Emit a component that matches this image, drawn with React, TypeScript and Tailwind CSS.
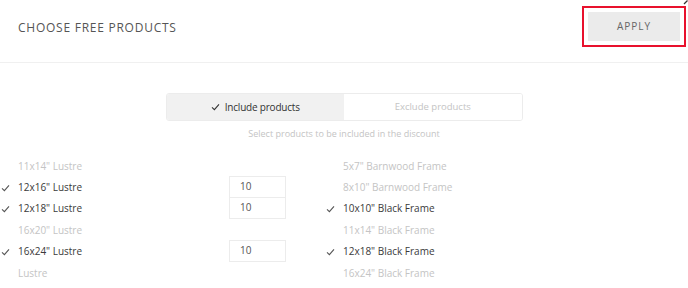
const left = [
  { name: '11x14" Lustre', on: false },
  { name: '12x16" Lustre', on: true, qty: '10' },
  { name: '12x18" Lustre', on: true, qty: '10' },
  { name: '16x20" Lustre', on: false },
  { name: '16x24" Lustre', on: true, qty: '10' },
  { name: 'Lustre', on: false },
]

const right = [
  { name: '5x7" Barnwood Frame', on: false },
  { name: '8x10" Barnwood Frame', on: false },
  { name: '10x10" Black Frame', on: true },
  { name: '11x14" Black Frame', on: false },
  { name: '12x18" Black Frame', on: true },
  { name: '16x24" Black Frame', on: false },
]

const Check = ({ className = '' }: { className?: string }) => (
  <svg width="9" height="8" viewBox="0 0 9 8" className={className}>
    <path d="M1 4.3 L3.4 6.6 L8 1.4" fill="none" stroke="currentColor" strokeWidth="1.1" />
  </svg>
)

type Item = { name: string; on: boolean; qty?: string }

const Row = ({ item, withQty }: { item: Item; withQty?: boolean }) => (
  <div className="flex h-[21.4px] items-center">
    <div className="w-[18px] flex items-center pl-[1px] text-[#555]">
      {item.on && <Check />}
    </div>
    <span className={`text-[10px] ${item.on ? 'text-[#3a3a3a]' : 'text-[#c4c4c4]'}`}>{item.name}</span>
    {withQty && item.qty && (
      <div className="ml-auto mr-[14px] mt-[-2px] flex h-[22px] w-[57px] items-center border border-[#ececec] pl-[10px] text-[10px] text-[#555]">
        {item.qty}
      </div>
    )}
  </div>
)

export default function App() {
  return (
    <div className="relative h-[288px] w-[688px] overflow-hidden bg-white font-['Open_Sans',sans-serif]">
      <svg className="absolute right-0 top-0" width="5" height="5" viewBox="0 0 5 5">
        <path d="M1 4 L4.5 0.5" stroke="#333" strokeWidth="1.2" />
      </svg>
      <div className="flex h-[63px] items-center justify-between border-b border-[#f0f0f0] pl-[18px] pr-[2px]">
        <h1 className="mt-[-6px] text-[12px] tracking-[0.75px] text-[#555]">CHOOSE FREE PRODUCTS</h1>
        <div className="mt-[-10px] border-2 border-[#e8112d] p-[4px]">
          <button className="flex h-[29px] w-[92px] items-center justify-center bg-[#ebebeb] text-[10px] tracking-[1px] text-[#666]">
            APPLY
          </button>
        </div>
      </div>
      <div className="flex flex-col items-center pt-[30px]">
        <div className="flex h-[28px] w-[357px] overflow-hidden rounded-[3px] border border-[#ececec]">
          <div className="flex flex-1 items-center justify-center gap-[5px] bg-[#f1f1f1] text-[10px] tracking-[-0.2px] text-[#333]">
            <Check />
            Include products
          </div>
          <div className="flex flex-1 items-center justify-center bg-white text-[9.5px] text-[#c4c4c4]">
            Exclude products
          </div>
        </div>
        <p className="mt-[6px] text-[9px] text-[#c4c4c4]">Select products to be included in the discount</p>
      </div>
      <div className="mt-[15px] flex">
        <div className="w-[300px]">
          {left.map((item) => (
            <Row key={item.name} item={item} withQty />
          ))}
        </div>
        <div className="ml-[25px] w-[300px]">
          {right.map((item) => (
            <Row key={item.name} item={item} />
          ))}
        </div>
      </div>
    </div>
  )
}
